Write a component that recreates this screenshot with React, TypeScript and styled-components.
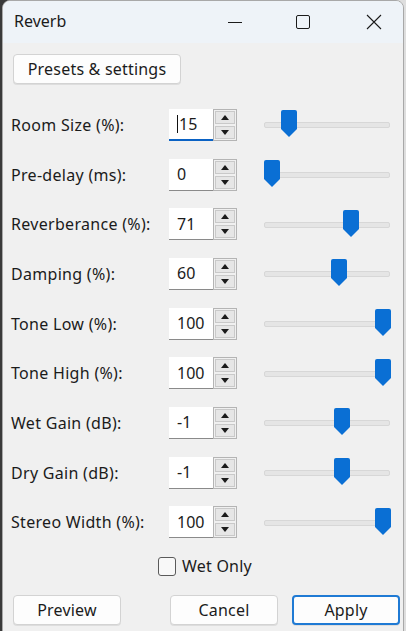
import styled, { createGlobalStyle } from "styled-components";

const GlobalStyle = createGlobalStyle`
  html, body {
    margin: 0;
    padding: 0;
    height: 100%;
    overflow: hidden;
  }
  body {
    font-family: "Noto Sans", "Open Sans", sans-serif;
    background: linear-gradient(to right, #3a3a3a 0 50%, #dedede 50%);
  }
`;

const Desktop = styled.div`
  height: 631px;
  padding-left: 2px;
  display: flex;
`;

const Window = styled.div`
  width: 400px;
  height: 640px;
  background: #f0f0f0;
  border: 1px solid #a8a8a8;
  border-radius: 8px 8px 0 0;
  overflow: hidden;
  display: flex;
  flex-direction: column;
`;

const TitleBar = styled.div`
  height: 42px;
  flex: none;
  background: #eef3f8;
  display: flex;
  align-items: center;
`;

const Title = styled.div`
  flex: 1;
  padding-left: 11px;
  font-size: 16px;
  color: #1b1b1b;
  padding-bottom: 2px;
`;

const Caption = styled.div<{ $w: number; $pl?: number }>`
  width: ${(p) => p.$w}px;
  height: 42px;
  box-sizing: border-box;
  padding-left: ${(p) => p.$pl ?? 0}px;
  display: flex;
  align-items: center;
  justify-content: center;
`;

const Body = styled.div`
  padding: 11px 0 0 8px;
  display: flex;
  flex-direction: column;
`;

const Button = styled.button<{ $primary?: boolean; $w?: number }>`
  height: 30px;
  width: ${(p) => (p.$w ? `${p.$w}px` : "auto")};
  padding: 0 8px;
  font-family: inherit;
  font-size: 16px;
  letter-spacing: 0.2px;
  color: #1b1b1b;
  background: #fdfdfd;
  border: ${(p) => (p.$primary ? "2px solid #1f7ad4" : "1px solid #d3d3d3")};
  border-radius: 4px;
  box-shadow: 0 1px 0 rgba(0, 0, 0, 0.08);
`;

const PresetBar = styled.div`
  display: flex;
  padding-left: 2px;
  margin-bottom: 16px;
`;

const Rows = styled.div`
  display: flex;
  flex-direction: column;
`;

const Row = styled.div`
  height: 49.7px;
  display: grid;
  grid-template-columns: 158px 69px 26px 126px;
  align-items: center;
`;

const Label = styled.div`
  font-size: 16px;
  letter-spacing: 0.3px;
  color: #1b1b1b;
  white-space: nowrap;
`;

const Spin = styled.div`
  display: flex;
  height: 32px;
`;

const Field = styled.div<{ $focus?: boolean }>`
  width: 44px;
  box-sizing: border-box;
  background: #fff;
  border-bottom: ${(p) => (p.$focus ? "2px solid #0a62c4" : "1px solid #8a8a8a")};
  font-size: 16px;
  color: #1b1b1b;
  display: flex;
  align-items: center;
  padding-left: 8px;
`;

const Caret = styled.span`
  display: inline-block;
  width: 1px;
  height: 18px;
  background: #111;
  margin-right: 1px;
`;

const Arrows = styled.div`
  width: 24px;
  display: flex;
  flex-direction: column;
  border: 1px solid #b4b4b4;
  box-sizing: border-box;
  background: #f0f0f0;
`;

const Arrow = styled.div`
  flex: 1;
  margin: 1px;
  border: 1px solid #c9c9c9;
  background: #e6e6e6;
  display: flex;
  align-items: center;
  justify-content: center;
`;

const Track = styled.div`
  position: relative;
  height: 4px;
  margin-top: 1px;
  background: #e5e5e5;
  border: 1px solid #d7d7d7;
  border-radius: 2px;
`;

const Thumb = styled.svg`
  position: absolute;
  top: -13px;
  margin-left: -9px;
`;

const CheckRow = styled.div`
  height: 30px;
  margin-top: 4px;
  display: flex;
  align-items: center;
  justify-content: center;
  gap: 6px;
  padding-right: 4px;
  font-size: 16px;
  letter-spacing: 0.2px;
  color: #1b1b1b;
`;

const Box = styled.div`
  width: 16px;
  height: 17px;
  border: 1.5px solid #5a5a5a;
  border-radius: 3px;
  background: #f8f8f8;
`;

const Footer = styled.div`
  display: flex;
  padding: 14px 0 0 2px;
  gap: 49px;
`;

const Right = styled.div`
  display: flex;
  gap: 14px;
`;

interface Param {
  label: string;
  value: string;
  pos: number;
  focus?: boolean;
}

const params: Param[] = [
  { label: "Room Size (%):", value: "15", pos: 0.15, focus: true },
  { label: "Pre-delay (ms):", value: "0", pos: 0 },
  { label: "Reverberance (%):", value: "71", pos: 0.71 },
  { label: "Damping (%):", value: "60", pos: 0.6 },
  { label: "Tone Low (%):", value: "100", pos: 1 },
  { label: "Tone High (%):", value: "100", pos: 1 },
  { label: "Wet Gain (dB):", value: "-1", pos: 19 / 30 },
  { label: "Dry Gain (dB):", value: "-1", pos: 19 / 30 },
  { label: "Stereo Width (%):", value: "100", pos: 1 },
];

function Tri({ up }: { up?: boolean }) {
  return (
    <svg width="8" height="5" viewBox="0 0 8 5">
      <path d={up ? "M0 5 L4 0 L8 5 Z" : "M0 0 L8 0 L4 5 Z"} fill="#1b1b1b" />
    </svg>
  );
}

function App() {
  return (
    <>
      <GlobalStyle />
      <Desktop>
        <Window>
          <TitleBar>
            <Title>Reverb</Title>
            <Caption $w={68}>
              <svg width="16" height="16" viewBox="0 0 16 16">
                <path d="M1 8.5 H15" stroke="#1b1b1b" strokeWidth="1" />
              </svg>
            </Caption>
            <Caption $w={68}>
              <svg width="16" height="16" viewBox="0 0 16 16">
                <rect x="1.5" y="1.5" width="13" height="13" rx="1.5" fill="none" stroke="#1b1b1b" strokeWidth="1" />
              </svg>
            </Caption>
            <Caption $w={66} $pl={8}>
              <svg width="16" height="16" viewBox="0 0 16 16">
                <path d="M1 1 L15 15 M15 1 L1 15" stroke="#1b1b1b" strokeWidth="1.1" />
              </svg>
            </Caption>
          </TitleBar>
          <Body>
            <PresetBar>
              <Button $w={168}>Presets &amp; settings</Button>
            </PresetBar>
            <Rows>
              {params.map((p) => (
                <Row key={p.label}>
                  <Label>{p.label}</Label>
                  <Spin>
                    <Field $focus={p.focus}>
                      {p.focus && <Caret />}
                      {p.value}
                    </Field>
                    <Arrows>
                      <Arrow>
                        <Tri up />
                      </Arrow>
                      <Arrow>
                        <Tri />
                      </Arrow>
                    </Arrows>
                  </Spin>
                  <div />
                  <Track>
                    <Thumb
                      width="18"
                      height="28"
                      viewBox="0 0 18 28"
                      style={{ left: `${7 + p.pos * 111}px` }}
                    >
                      <path d="M1 2 Q1 0 3 0 H15 Q17 0 17 2 V19 L9 27 L1 19 Z" fill="#0a6fd4" />
                    </Thumb>
                  </Track>
                </Row>
              ))}
            </Rows>
            <CheckRow>
              <Box />
              Wet Only
            </CheckRow>
            <Footer>
              <Button $w={108}>Preview</Button>
              <Right>
                <Button $w={108}>Cancel</Button>
                <Button $w={108} $primary>
                  Apply
                </Button>
              </Right>
            </Footer>
          </Body>
        </Window>
      </Desktop>
    </>
  );
}

export default App;
